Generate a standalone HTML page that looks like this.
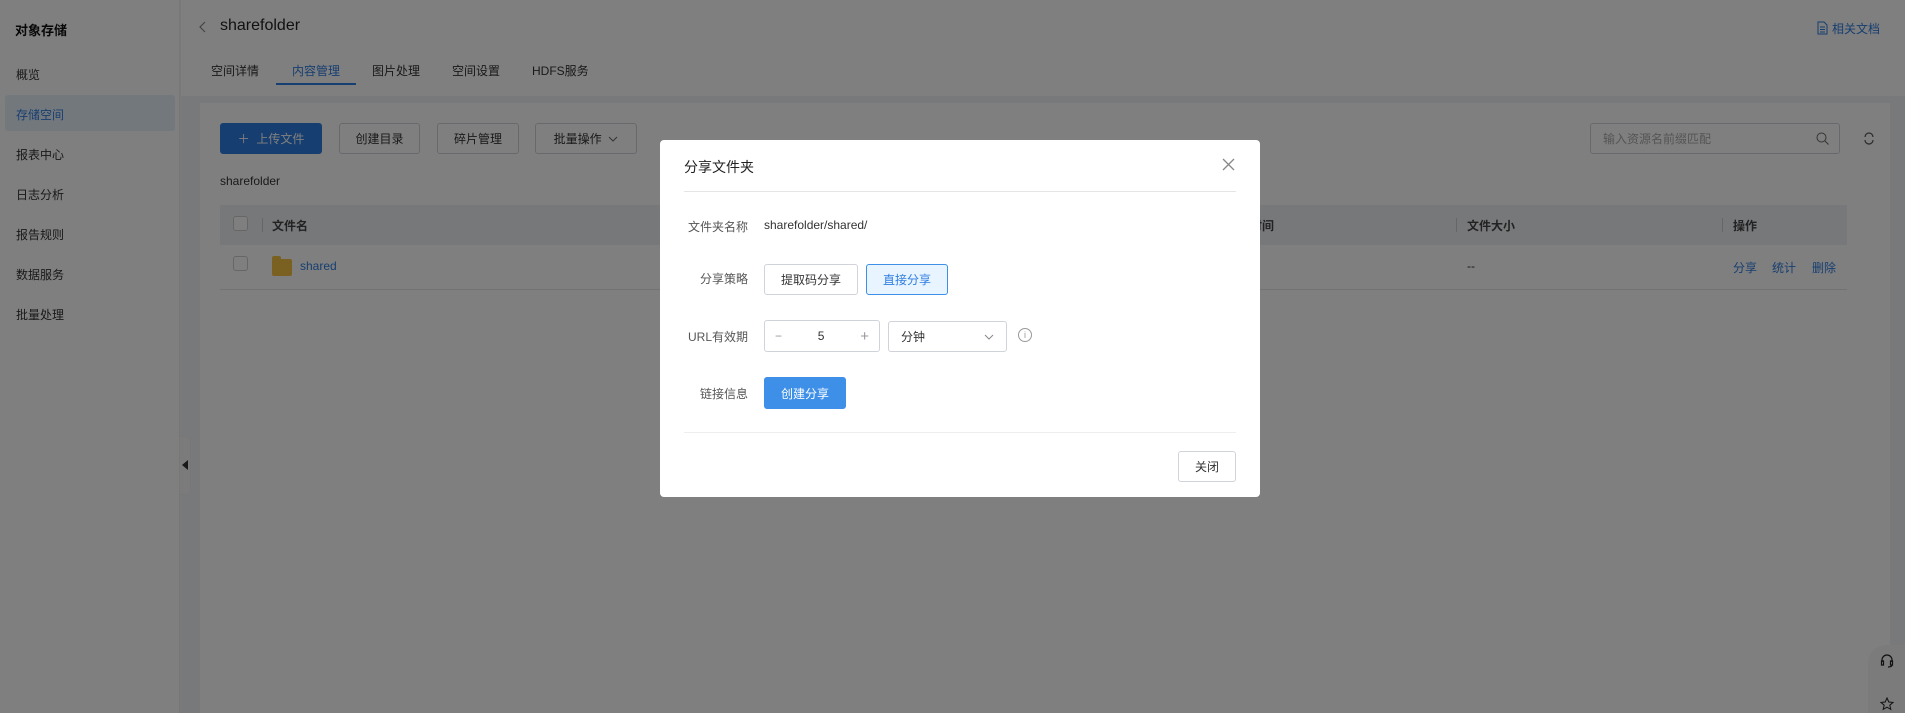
<!DOCTYPE html>
<html><head><meta charset="utf-8"><style>
*{box-sizing:border-box;margin:0;padding:0}
body{width:1905px;height:713px;overflow:hidden;position:relative;font-family:"Liberation Sans","Noto Sans CJK SC",sans-serif;font-size:12px;color:#333;background:#f0f2f5}
.a{position:absolute;white-space:nowrap}
.side{left:0;top:0;width:180px;height:713px;background:#fff;border-right:1px solid #eee}
.btn{position:absolute;border:1px solid #d0d3d9;border-radius:3px;background:#fff;display:flex;align-items:center;justify-content:center;font-size:12px;color:#333}
.cb{position:absolute;width:15px;height:15px;border:1px solid #ccc;border-radius:3px;background:#fff}
.ov{position:absolute;left:0;top:0;width:1905px;height:713px;background:rgba(0,0,0,.5)}
.lbl{position:absolute;width:100px;text-align:right;left:648px;font-size:12px;color:#555}
</style></head><body>
<div class="a side"></div>
<div class="a" style="left:15px;top:20px;font-size:13px;font-weight:bold;color:#111">对象存储</div>
<div class="a" style="left:5px;top:95px;width:170px;height:36px;background:#e7f1fb;border-radius:3px"></div>
<div class="a" style="left:16px;top:66px">概览</div>
<div class="a" style="left:16px;top:106px;color:#2f7de1">存储空间</div>
<div class="a" style="left:16px;top:146px">报表中心</div>
<div class="a" style="left:16px;top:186px">日志分析</div>
<div class="a" style="left:16px;top:226px">报告规则</div>
<div class="a" style="left:16px;top:266px">数据服务</div>
<div class="a" style="left:16px;top:306px">批量处理</div>
<div class="a" style="left:180px;top:436px;width:11px;height:59px;background:#f7f7f7;border:1px solid #eee;border-left:none;border-radius:0 6px 6px 0"></div>
<div class="a" style="left:182px;top:460px;width:0;height:0;border-top:5px solid transparent;border-bottom:5px solid transparent;border-right:6px solid #333"></div>
<div class="a" style="left:181px;top:0;width:1724px;height:96px;background:#fff"></div>
<svg class="a" style="left:199px;top:21px" width="8" height="12"><path d="M6 1L1 6l5 5" stroke="#888" fill="none" stroke-width="1.2"/></svg>
<div class="a" style="left:220px;top:17px;font-size:16px;color:#222">sharefolder</div>
<svg class="a" style="left:1817px;top:21px" width="11" height="14"><path d="M1 1h6l3 3v9H1z M3 6h5M3 8.5h5M3 11h5" stroke="#2f7de1" fill="none"/></svg>
<div class="a" style="left:1832px;top:20px;font-size:12px;color:#2f7de1">相关文档</div>
<div class="a" style="left:211px;top:62px">空间详情</div>
<div class="a" style="left:292px;top:62px;color:#2f7de1">内容管理</div>
<div class="a" style="left:372px;top:62px">图片处理</div>
<div class="a" style="left:452px;top:62px">空间设置</div>
<div class="a" style="left:532px;top:62px">HDFS服务</div>
<div class="a" style="left:276px;top:83px;width:80px;height:2px;background:#2f7de1"></div>
<div class="a" style="left:200px;top:103px;width:1690px;height:610px;background:#fff"></div>
<div class="btn" style="left:220px;top:123px;width:102px;height:31px;background:#2f7de1;border-color:#2f7de1;color:#fff">＋&nbsp; 上传文件</div>
<div class="btn" style="left:339px;top:123px;width:81px;height:31px">创建目录</div>
<div class="btn" style="left:437px;top:123px;width:82px;height:31px">碎片管理</div>
<div class="btn" style="left:535px;top:123px;width:102px;height:31px">批量操作&nbsp;&nbsp;<svg width="10" height="6"><path d="M1 1l4 4 4-4" stroke="#666" fill="none"/></svg></div>
<div class="a" style="left:220px;top:174px">sharefolder</div>
<div class="btn" style="left:1590px;top:123px;width:250px;height:31px;justify-content:flex-start;padding-left:12px;color:#aaa;font-size:12px">输入资源名前缀匹配<svg style="position:absolute;right:10px" width="13" height="13"><circle cx="5.5" cy="5.5" r="4.5" stroke="#666" fill="none"/><path d="M9 9l3.5 3.5" stroke="#666"/></svg></div>
<svg class="a" style="left:1863px;top:132px" width="12" height="13"><path d="M2 5a4 4 0 0 1 8 0M10 8a4 4 0 0 1-8 0" stroke="#555" fill="none" stroke-width="1.2"/></svg>
<div class="a" style="left:220px;top:205px;width:1627px;height:40px;background:#eef0f4"></div>
<div class="cb" style="left:233px;top:216px"></div>
<div class="a" style="left:262px;top:218px;width:1px;height:14px;background:#ccc"></div>
<div class="a" style="left:272px;top:217px;font-weight:bold;color:#444">文件名</div>
<div class="a" style="left:1226px;top:217px;font-weight:bold;color:#444">修改时间</div>
<div class="a" style="left:1456px;top:218px;width:1px;height:14px;background:#ccc"></div>
<div class="a" style="left:1467px;top:217px;font-weight:bold;color:#444">文件大小</div>
<div class="a" style="left:1722px;top:218px;width:1px;height:14px;background:#ccc"></div>
<div class="a" style="left:1733px;top:217px;font-weight:bold;color:#444">操作</div>
<div class="cb" style="left:233px;top:256px"></div>
<div class="a" style="left:272px;top:259px;width:20px;height:17px;background:#f5c242;border-radius:2px"></div>
<div class="a" style="left:272px;top:256px;width:9px;height:4px;background:#f5c242;border-radius:2px 2px 0 0"></div>
<div class="a" style="left:300px;top:259px;color:#2f7de1">shared</div>
<div class="a" style="left:1467px;top:259px">--</div>
<div class="a" style="left:1733px;top:259px;color:#2f7de1">分享</div>
<div class="a" style="left:1772px;top:259px;color:#2f7de1">统计</div>
<div class="a" style="left:1812px;top:259px;color:#2f7de1">删除</div>
<div class="a" style="left:220px;top:289px;width:1627px;height:1px;background:#e5e5e5"></div>
<div class="a" style="left:1868px;top:645px;width:37px;height:68px;background:#f7f7f7;border-radius:18px 0 0 0"></div>
<svg class="a" style="left:1880px;top:653px" width="14" height="15"><path d="M2 9V7a5 5 0 0 1 10 0v2M1.5 8h2v4h-2zM10.5 8h2v4h-2zM12 12q0 2-4 2" stroke="#222" fill="none" stroke-width="1.2"/></svg>
<svg class="a" style="left:1880px;top:697px" width="14" height="14"><path d="M7 1l1.8 4 4.2.4-3.2 2.8 1 4.2L7 10.2 3.2 12.4l1-4.2L1 5.4l4.2-.4z" stroke="#222" fill="none"/></svg>
<div class="ov"></div>
<div class="a" style="left:660px;top:140px;width:600px;height:357px;background:#fff;border-radius:4px"></div>
<div class="a" style="left:684px;top:157px;font-size:14px;color:#222">分享文件夹</div>
<svg class="a" style="left:1222px;top:158px" width="13" height="13"><path d="M1 1l11 11M12 1L1 12" stroke="#888" stroke-width="1.3"/></svg>
<div class="a" style="left:684px;top:191px;width:552px;height:1px;background:#e5e5e5"></div>
<div class="lbl" style="top:218px">文件夹名称</div>
<div class="a" style="left:764px;top:218px">sharefolder/shared/</div>
<div class="lbl" style="top:270px">分享策略</div>
<div class="btn" style="left:764px;top:264px;width:94px;height:31px">提取码分享</div>
<div class="btn" style="left:866px;top:264px;width:82px;height:31px;background:#e8f4ff;border-color:#3d8fe8;color:#2f7de1">直接分享</div>
<div class="lbl" style="top:328px">URL有效期</div>
<div class="btn" style="left:764px;top:320px;width:116px;height:32px;justify-content:space-between;padding:0 10px;color:#999"><span>−</span><span style="color:#333">5</span><span style="font-size:15px">+</span></div>
<div class="btn" style="left:888px;top:321px;width:119px;height:31px;justify-content:space-between;padding:0 12px"><span>分钟</span><svg width="10" height="6"><path d="M1 1l4 4 4-4" stroke="#888" fill="none"/></svg></div>
<div class="a" style="left:1018px;top:328px;width:14px;height:14px;border:1px solid #999;border-radius:50%;font-size:9px;text-align:center;line-height:12px;color:#999">i</div>
<div class="lbl" style="top:385px">链接信息</div>
<div class="btn" style="left:764px;top:377px;width:82px;height:32px;background:#3d8fe8;border-color:#3d8fe8;color:#fff">创建分享</div>
<div class="a" style="left:684px;top:432px;width:552px;height:1px;background:#eee"></div>
<div class="btn" style="left:1178px;top:451px;width:58px;height:31px">关闭</div>
</body></html>
